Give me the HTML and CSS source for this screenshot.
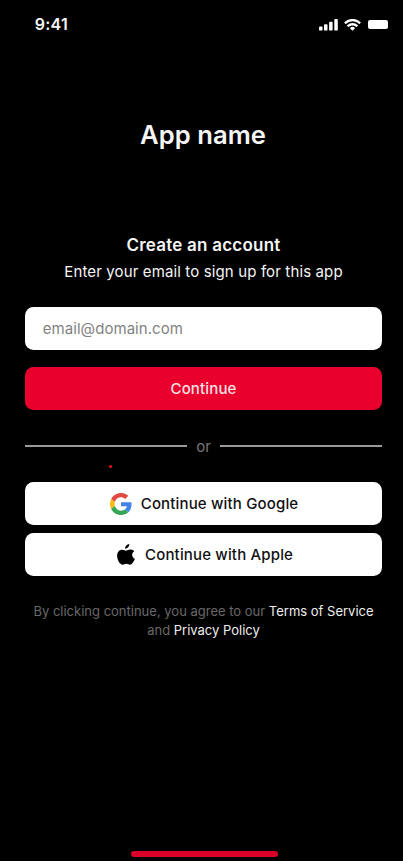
FILE: index.html
```html
<!DOCTYPE html>
<html lang="en">
<head>
<meta charset="utf-8">
<meta name="viewport" content="width=device-width, initial-scale=1">
<title>App name</title>
<link rel="stylesheet" href="styles.css">
</head>
<body>
<main class="screen">
  <header class="status">
    <span class="time">9:41</span>
    <div class="indicators">
      <svg class="signal" width="19" height="12" viewBox="0 0 19 12"><rect x="0" y="7.4" width="3.5" height="4.2" rx=".9"/><rect x="5" y="5.2" width="3.5" height="6.4" rx=".9"/><rect x="10.1" y="2.7" width="3.5" height="8.9" rx=".9"/><rect x="15.3" y="0" width="3.5" height="11.6" rx=".9"/></svg>
      <svg class="wifi" width="17" height="12" viewBox="0.3 0.3 16.400 11.400"><path d="M8.5 2.5c2.4 0 4.6.9 6.3 2.5.1.1.3.1.4 0l1.2-1.2c.1-.1.1-.3 0-.5a11.4 11.4 0 0 0-15.8 0c-.1.2-.1.4 0 .5L1.8 5c.1.1.3.1.4 0a9.1 9.1 0 0 1 6.3-2.5zm0 4c1.3 0 2.6.5 3.6 1.4.1.1.3.1.4 0l1.2-1.2c.2-.2.2-.4 0-.5a7.6 7.6 0 0 0-10.4 0c-.2.1-.2.3 0 .5l1.2 1.2c.1.1.3.1.4 0 1-.9 2.3-1.4 3.6-1.4zm2.4 2.7c.1-.1.1-.3 0-.4a3.7 3.7 0 0 0-4.8 0c-.1.1-.1.3 0 .4l2.1 2.2c.2.2.4.2.6 0z"/></svg>
      <span class="battery"></span>
    </div>
  </header>
  <h1 class="brand">App name</h1>
  <h2 class="title">Create an account</h2>
  <p class="subtitle">Enter your email to sign up for this app</p>
  <form class="form">
    <input class="email" type="email" placeholder="email@domain.com" aria-label="Email">
    <button class="button primary" type="button">Continue</button>
    <div class="divider"><span class="word">or</span></div>
    <button class="button social google" type="button">
      <span class="speck"></span>
      <svg width="22" height="22" viewBox="0 0 48 48"><path fill="#e04a3f" d="M24 9.500c3.540 0 6.710 1.220 9.210 3.600l6.850-6.850C35.900 2.380 30.470 0 24 0 14.620 0 6.510 5.380 2.560 13.220l7.980 6.190C12.430 13.720 17.740 9.500 24 9.500z"/><path fill="#4285e8" d="M46.980 24.550c0-1.570-.15-3.090-.38-4.550H24v9.020h12.940c-.58 2.960-2.260 5.480-4.780 7.180l7.730 6c4.510-4.180 7.090-10.360 7.090-17.650z"/><path fill="#f9bc15" d="M10.530 28.590c-.48-1.450-.76-2.990-.76-4.590s.27-3.140.76-4.590l-7.980-6.190C.92 16.460 0 20.120 0 24c0 3.880.92 7.540 2.560 10.780z"/><path fill="#34a557" d="M24 48c6.480 0 11.930-2.130 15.890-5.810l-7.730-6c-2.150 1.450-4.920 2.300-8.160 2.300-6.260 0-11.570-4.220-13.470-9.910l-7.980 6.190C6.510 42.620 14.620 48 24 48z"/></svg>
      <span>Continue with Google</span>
    </button>
    <button class="button social apple" type="button">
      <svg width="18" height="21" viewBox="0 0 18 21"><path d="M12.300.1c.2 2.500-1.900 4.800-4.100 4.700C7.900 2.500 10 .3 12.300.1zM17.300 7.300c-3.200 1.900-2.600 6.200.6 7.500-.8 2.300-2.700 5.800-4.700 5.900-1.500.1-2-.9-3.800-.9s-2.300.9-3.700.9C3 20.800.1 15.800.1 11.800.1 7.800 2.600 5.700 5.100 5.700c1.700 0 3 1 4 1 .9 0 2.500-1.200 4.500-1.100 1.500.1 2.900.6 3.700 1.700z"/></svg>
      <span>Continue with Apple</span>
    </button>
  </form>
  <p class="legal">By clicking continue, you agree to our <a>Terms of Service</a><br>and <a>Privacy Policy</a></p>
  <div class="home"></div>
</main>
</body>
</html>
```
FILE: styles.css
```css
* { box-sizing: border-box; }
body { margin: 0; background: #000; }
.screen {
  display: flex;
  flex-direction: column;
  height: 861px;
  padding: 0 21.3px 4px 25.3px;
  overflow: hidden;
  color: #f5f5f5;
  font-family: Inter, sans-serif;
  font-size: 15px;
}
.status {
  display: flex;
  justify-content: space-between;
  height: 48px;
  margin-right: -6px;
  padding: 14px 0 0 9.5px;
}
.time { font-size: 16px; font-weight: 600; line-height: 21px; letter-spacing: 0.2px; }
.indicators {
  display: flex;
  align-items: center;
  height: 21px;
  gap: 6px;
  fill: #fff;
}
.battery { width: 20px; height: 9px; margin-left: 1px; border-radius: 2px; background: #fff; }
.brand { margin: 71px 0 0; padding-right: 1px; font-size: 25.6px; line-height: 32px; font-weight: 600; letter-spacing: 0.05px; text-align: center; }
.title { margin: 82px 0 0; font-size: 17px; line-height: 24px; font-weight: 600; letter-spacing: 0.22px; text-align: center; }
.subtitle { margin: 3px 0 0; line-height: 24px; letter-spacing: 0.13px; text-align: center; }
.form { display: flex; flex-direction: column; width: 356.5px; margin-top: 23.4px; }
.email, .button {
  width: 100%;
  height: 42.6px;
  border: 0;
  border-radius: 8.5px;
  font: inherit;
}
.email { padding: 0 17.5px; background: #fff; color: #000; letter-spacing: 0.05px; }
.email::placeholder { color: #828282; opacity: 1; }
.button { display: flex; align-items: center; justify-content: center; padding: 1px 0 0; font-weight: 500; letter-spacing: 0.16px; }
.primary { margin-top: 17px; background: #e9002c; color: #f6e2e5; }
.divider { display: flex; align-items: center; gap: 9px; height: 24px; margin: 24.8px 0 23.8px; }
.divider::before, .divider::after { content: ""; flex: 1; height: 2px; margin-bottom: 1px; background: #999; }
.word { color: #777; }
.social { position: relative; background: #fff; color: #111; }
.google { gap: 9px; padding-left: 1px; }
.apple { gap: 10px; margin-top: 8.4px; padding-left: 3px; }
.speck { position: absolute; left: 84.2px; top: -17px; width: 3px; height: 3px; border-radius: 50%; background: #f0151b; }
.legal { margin: 25.8px 0 0; color: #686868; font-size: 13px; line-height: 19.5px; text-align: center; }
.legal a { color: #eee; }
.home { width: 147px; height: 6px; margin: auto 0 0 105.7px; border-radius: 3px; background: #dc0028; }
```
